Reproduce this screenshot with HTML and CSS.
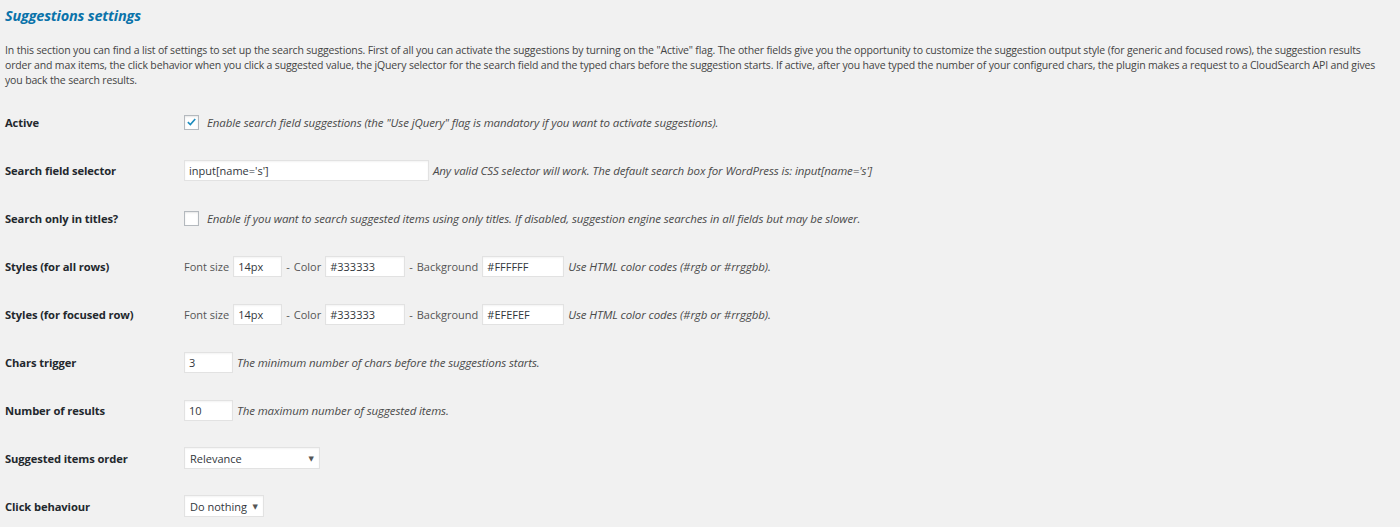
FILE: index.html
```html
<!DOCTYPE html>
<html lang="en">
<head>
<meta charset="utf-8">
<title>Suggestions settings</title>
<link rel="stylesheet" href="styles.css">
</head>
<body>
<div class="wrap">
  <h2 class="title">Suggestions settings</h2>
  <p class="intro">In this section you can find a list of settings to set up the search suggestions. First of all you can activate the suggestions by turning on the "Active" flag. The other fields give you the opportunity to customize the suggestion output style (for generic and focused rows), the suggestion results order and max items, the click behavior when you click a suggested value, the jQuery selector for the search field and the typed chars before the suggestion starts. If active, after you have typed the number of your configured chars, the plugin makes a request to a CloudSearch API and gives you back the search results.</p>

  <div class="form">
    <div class="row">
      <div class="label">Active</div>
      <div class="field">
        <span class="check checked"><svg viewBox="0 0 16 16" width="14" height="14"><path d="M3.5 8.2 L6.6 11.2 L12.6 4.2" fill="none" stroke="#1e8cbe" stroke-width="2"/></svg></span>
        <span class="desc">Enable search field suggestions (the "Use jQuery" flag is mandatory if you want to activate suggestions).</span>
      </div>
    </div>
    <div class="row">
      <div class="label">Search field selector</div>
      <div class="field">
        <span class="input w-selector">input[name='s']</span>
        <span class="desc">Any valid CSS selector will work. The default search box for WordPress is: input[name='s']</span>
      </div>
    </div>
    <div class="row">
      <div class="label">Search only in titles?</div>
      <div class="field">
        <span class="check"></span>
        <span class="desc">Enable if you want to search suggested items using only titles. If disabled, suggestion engine searches in all fields but may be slower.</span>
      </div>
    </div>
    <div class="row">
      <div class="label">Styles (for all rows)</div>
      <div class="field">
        <span class="plain">Font size</span>
        <span class="input w-small">14px</span>
        <span class="plain dash">-</span>
        <span class="plain">Color</span>
        <span class="input w-color">#333333</span>
        <span class="plain dash">-</span>
        <span class="plain">Background</span>
        <span class="input w-bg">#FFFFFF</span>
        <span class="desc">Use HTML color codes (#rgb or #rrggbb).</span>
      </div>
    </div>
    <div class="row">
      <div class="label">Styles (for focused row)</div>
      <div class="field">
        <span class="plain">Font size</span>
        <span class="input w-small">14px</span>
        <span class="plain dash">-</span>
        <span class="plain">Color</span>
        <span class="input w-color">#333333</span>
        <span class="plain dash">-</span>
        <span class="plain">Background</span>
        <span class="input w-bg">#EFEFEF</span>
        <span class="desc">Use HTML color codes (#rgb or #rrggbb).</span>
      </div>
    </div>
    <div class="row">
      <div class="label">Chars trigger</div>
      <div class="field">
        <span class="input w-small">3</span>
        <span class="desc">The minimum number of chars before the suggestions starts.</span>
      </div>
    </div>
    <div class="row">
      <div class="label">Number of results</div>
      <div class="field">
        <span class="input w-small">10</span>
        <span class="desc">The maximum number of suggested items.</span>
      </div>
    </div>
    <div class="row">
      <div class="label">Suggested items order</div>
      <div class="field">
        <span class="select w-order">Relevance<span class="arrow">▼</span></span>
      </div>
    </div>
    <div class="row">
      <div class="label">Click behaviour</div>
      <div class="field">
        <span class="select w-click">Do nothing<span class="arrow">▼</span></span>
      </div>
    </div>
  </div>
</div>
</body>
</html>
```

FILE: styles.css
```css
html, body {
  margin: 0;
  padding: 0;
  background: #f1f1f1;
}
body {
  font-family: "Open Sans", "DejaVu Sans", sans-serif;
  color: #444;
  font-size: 11px;
}
.wrap {
  padding: 0 14px 0 5px;
}
.title {
  margin: 0;
  padding-top: 6px;
  font-size: 14.5px;
  font-style: italic;
  font-weight: 700;
  color: #0a73aa;
  line-height: 20px;
  letter-spacing: -0.2px;
}
.intro {
  margin: 17px 0 0 0;
  font-size: 10.5px;
  line-height: 15px;
  color: #444;
  letter-spacing: -0.15px;
}
.form {
  margin-top: 10px;
}
.row {
  display: flex;
  align-items: center;
  height: 48px;
}
.label {
  width: 179px;
  flex: none;
  font-weight: 700;
  font-size: 11.2px;
  color: #23282d;
  letter-spacing: -0.1px;
}
.field {
  display: flex;
  align-items: center;
  gap: 4px;
}
.check {
  width: 13px;
  height: 13px;
  border: 1px solid #b4b9be;
  background: #fff;
  box-shadow: inset 0 1px 2px rgba(0,0,0,0.1);
  display: inline-flex;
  align-items: center;
  justify-content: center;
  margin-right: 4px;
}
.desc {
  font-style: italic;
  font-size: 11.5px;
  color: #4a4a4a;
  letter-spacing: -0.1px;
}
.plain {
  font-size: 11px;
  color: #555;
}
.dash {
  padding: 0;
}
.input, .select {
  box-sizing: border-box;
  height: 21px;
  border: 1px solid #e2e2e2;
  background: #fff;
  box-shadow: inset 0 1px 2px rgba(0,0,0,0.05);
  font-size: 11px;
  color: #32373c;
  display: inline-flex;
  align-items: center;
  padding: 0 4px;
}
.w-selector { width: 245px; }
.w-small { width: 49px; }
.w-color { width: 80px; }
.w-bg { width: 82px; }
.select {
  justify-content: space-between;
  height: 22px;
  padding: 0 5px;
}
.w-order { width: 136px; }
.w-click { width: 80px; }
.arrow {
  font-size: 7px;
  color: #555;
}
```
